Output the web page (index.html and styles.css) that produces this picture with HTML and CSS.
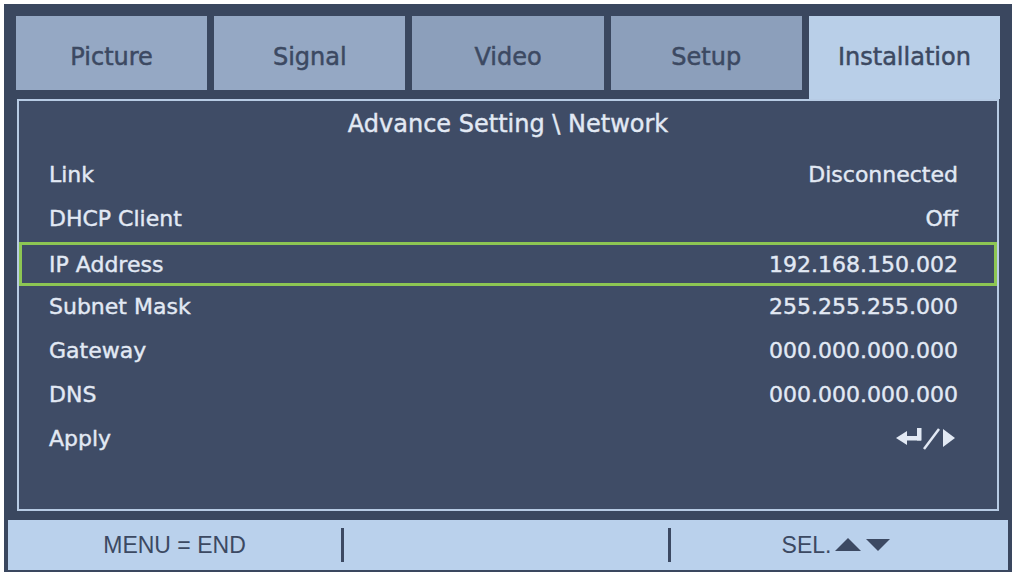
FILE: index.html
```html
<!DOCTYPE html>
<html lang="en">
<head>
    <meta charset="UTF-8">
    <meta name="viewport" content="width=device-width, initial-scale=1.0">
    <title>Installation - Network</title>
    <link rel="stylesheet" href="styles.css">
</head>
<body>
    <div class="osd">
        <div class="tabs">
            <div class="tab">Picture</div>
            <div class="tab">Signal</div>
            <div class="tab">Video</div>
            <div class="tab">Setup</div>
            <div class="tab active">Installation</div>
        </div>
        <div class="panel">
            <div class="panel-title">Advance Setting \ Network</div>
            <div class="rows">
                <div class="row"><span>Link</span><span>Disconnected</span></div>
                <div class="row"><span>DHCP Client</span><span>Off</span></div>
                <div class="row selected"><span>IP Address</span><span>192.168.150.002</span></div>
                <div class="row"><span>Subnet Mask</span><span>255.255.255.000</span></div>
                <div class="row"><span>Gateway</span><span>000.000.000.000</span></div>
                <div class="row"><span>DNS</span><span>000.000.000.000</span></div>
                <div class="row">
                    <span>Apply</span>
                    <svg class="apply-icon" width="62" height="26" viewBox="0 0 62 26">
                        <polygon points="0,13 11,6 11,20" fill="#e2e9f4"/>
                        <rect x="9" y="11" width="16" height="4.5" fill="#e2e9f4"/>
                        <rect x="21" y="3" width="4.5" height="12.5" fill="#e2e9f4"/>
                        <line x1="28" y1="24" x2="43" y2="4" stroke="#e2e9f4" stroke-width="2.5"/>
                        <polygon points="47,4 59,13 47,22" fill="#e2e9f4"/>
                    </svg>
                </div>
            </div>
        </div>
        <div class="footer">
            <div class="footer-item first">MENU = END</div>
            <div class="footer-item middle"></div>
            <div class="footer-item last">
                SEL.
                <svg class="arrows" width="56" height="14" viewBox="0 0 56 14">
                    <polygon points="0,13 13,0 26,13" fill="#3c4962"/>
                    <polygon points="31,1 55,1 43,13" fill="#3c4962"/>
                </svg>
            </div>
        </div>
    </div>
</body>
</html>
```

FILE: styles.css
```css
body {
    margin: 0;
    background: #ffffff;
    font-family: "DejaVu Sans", sans-serif;
}
.osd {
    margin: 4px 0 0 4px;
    width: 1008px;
    height: 568px;
    box-sizing: border-box;
    padding: 12px 12px 2px;
    background: #3a475f;
    display: flex;
    flex-direction: column;
}
.tabs {
    display: flex;
    gap: 7px;
    height: 83px;
    align-items: flex-start;
}
.tab {
    flex: 1;
    height: 74px;
    background: #95a8c4;
    color: #3c4962;
    font-size: 24px;
    -webkit-text-stroke: 0.5px #3c4962;
    display: flex;
    align-items: center;
    justify-content: center;
    padding-top: 8px;
    box-sizing: border-box;
}
.tab:nth-child(3),
.tab:nth-child(4) {
    background: #8c9fbb;
}
.tab.active {
    height: 83px;
    background: #b9cfe8;
    padding-top: 0;
    align-items: flex-start;
    line-height: 82px;
}
.panel {
    height: 414px;
    margin: 0 1px;
    border: 2px solid #b7cbe4;
    background: #3f4c66;
    color: #e2e9f4;
    box-sizing: border-box;
    -webkit-text-stroke: 0.4px #e2e9f4;
}
.panel-title {
    text-align: center;
    font-size: 24px;
    line-height: 36px;
    margin-top: 5px;
}
.rows {
    margin-top: 10px;
}
.row {
    height: 44px;
    display: flex;
    align-items: center;
    justify-content: space-between;
    padding: 0 39px 0 30px;
    font-size: 22px;
    box-sizing: border-box;
}
.row.selected {
    border: 3px solid #8dc653;
    padding: 0 36px 0 27px;
    margin-top: 2px;
    margin-bottom: -2px;
}
.apply-icon {
    display: block;
    margin-right: 0;
}
.footer {
    margin: 9px -8px 0;
    height: 50px;
    background: #bad1ec;
    display: flex;
    align-items: center;
}
.footer-item {
    text-align: center;
    font-family: "Liberation Sans", Arial, sans-serif;
    font-size: 23px;
    color: #3c4962;
}
.footer-item.first {
    width: 333px;
}
.footer-item.middle {
    width: 324px;
    height: 34px;
    border-left: 3px solid #3c4962;
    border-right: 3px solid #3c4962;
}
.footer-item.last {
    flex: 1;
    display: flex;
    align-items: center;
    justify-content: center;
    gap: 4px;
    padding-right: 6px;
}
.arrows {
    display: block;
}
```
